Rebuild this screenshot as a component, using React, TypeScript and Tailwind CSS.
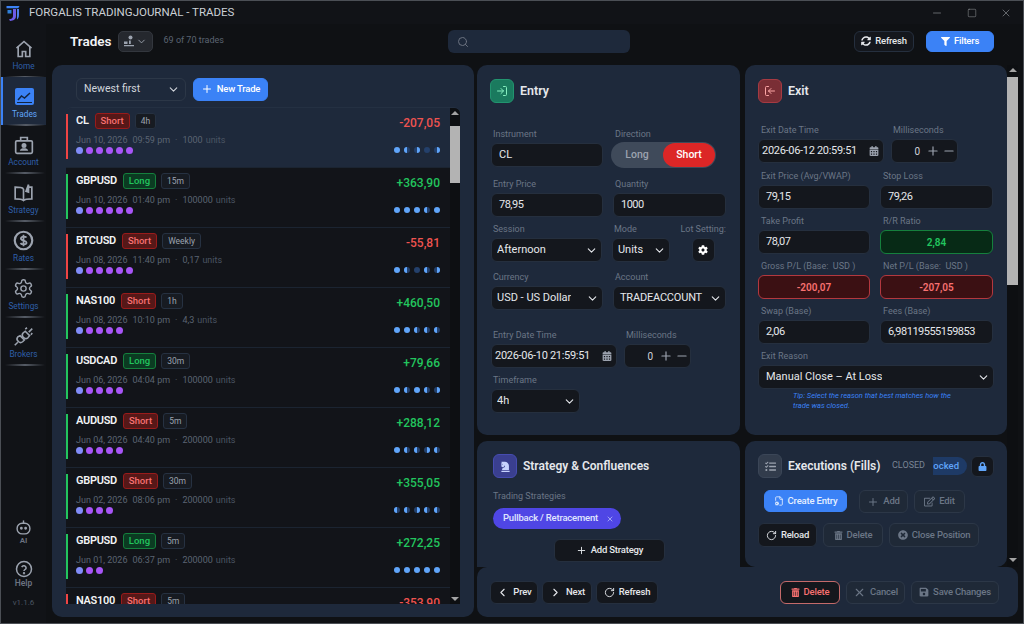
import {
  ChevronDown,
  ChevronLeft,
  ChevronRight,
  FileCog,
  LogIn,
  Minus,
  Plus,
  RotateCw,
  Search,
  Square,
  X,
} from "lucide-react";
import {
  FaCalendarAlt,
  FaChessKnight,
  FaCog,
  FaFilter,
  FaLock,
  FaRegEdit,
  FaSave,
  FaSyncAlt,
  FaTasks,
  FaTimesCircle,
  FaTrashAlt,
} from "react-icons/fa";
import type { ReactNode } from "react";

type Trade = {
  sym: string;
  side: "Long" | "Short";
  tf: string;
  date: string;
  time: string;
  units: string;
  pnl: string;
  bar: "green" | "red";
  dots: number;
  moons: number[];
};

// moons: 0 = dim disc, 1 = left half lit, 2 = full, 3 = right half lit
const trades: Trade[] = [
  { sym: "CL", side: "Short", tf: "4h", date: "Jun 10, 2026", time: "09:59 pm", units: "1000", pnl: "-207,05", bar: "red", dots: 6, moons: [2, 1, 3, 0, 3] },
  { sym: "GBPUSD", side: "Long", tf: "15m", date: "Jun 10, 2026", time: "01:40 pm", units: "100000", pnl: "+363,90", bar: "green", dots: 6, moons: [2, 2, 2, 1, 2] },
  { sym: "BTCUSD", side: "Short", tf: "Weekly", date: "Jun 08, 2026", time: "11:40 pm", units: "0,17", pnl: "-55,81", bar: "red", dots: 6, moons: [2, 1, 0, 1, 3] },
  { sym: "NAS100", side: "Short", tf: "1h", date: "Jun 08, 2026", time: "10:10 pm", units: "4,3", pnl: "+460,50", bar: "green", dots: 5, moons: [2, 2, 1, 1, 1] },
  { sym: "USDCAD", side: "Long", tf: "30m", date: "Jun 06, 2026", time: "04:04 pm", units: "100000", pnl: "+79,66", bar: "green", dots: 5, moons: [2, 1, 2, 1, 3] },
  { sym: "AUDUSD", side: "Short", tf: "5m", date: "Jun 04, 2026", time: "04:40 pm", units: "200000", pnl: "+288,12", bar: "green", dots: 5, moons: [2, 1, 1, 3, 1] },
  { sym: "GBPUSD", side: "Short", tf: "30m", date: "Jun 02, 2026", time: "08:06 pm", units: "200000", pnl: "+355,05", bar: "green", dots: 4, moons: [1, 1, 3, 1, 1] },
  { sym: "GBPUSD", side: "Long", tf: "5m", date: "Jun 01, 2026", time: "06:37 pm", units: "200000", pnl: "+272,25", bar: "green", dots: 3, moons: [2, 2, 2, 2, 2] },
  { sym: "NAS100", side: "Short", tf: "5m", date: "May 29, 2026", time: "03:12 pm", units: "2", pnl: "-353,90", bar: "red", dots: 3, moons: [1, 1, 1, 1, 1] },
];

function Moon({ level }: { level: number }) {
  if (level === 2) return <span className="w-[6.5px] h-[6.5px] rounded-full bg-[#60a5fa]" />;
  if (level === 0) return <span className="w-[6.5px] h-[6.5px] rounded-full bg-[#24406b]" />;
  return (
    <span className={`w-[6.5px] h-[6.5px] rounded-full bg-[#24406b] overflow-hidden flex ${level === 3 ? "justify-end" : ""}`}>
      <span className="w-[3.5px] h-full bg-[#60a5fa]" />
    </span>
  );
}

function TradeRow({ t, active }: { t: Trade; active?: boolean }) {
  return (
    <div className={`h-[60px] shrink-0 flex border-b border-[#1b2431] pr-[20px] pt-[6px] ${active ? "bg-[#1e293b]" : "bg-[#121419]"}`}>
      <div className={`w-[2px] h-[45px] ${t.bar === "red" ? "bg-[#ef4444]" : "bg-[#22c55e]"}`} />
      <div className="ml-[8px] flex-1 min-w-0">
        <div className="flex items-center h-[16px] mt-[-1px]">
          <span className="text-[11px] font-semibold tracking-[-0.3px] text-[#f3f4f6]">{t.sym}</span>
          <span
            className={`ml-[6px] h-[16px] px-[5px] flex items-center rounded-[3px] border text-[9.5px] font-medium ${
              t.side === "Long"
                ? "bg-[#0b3b22] border-[#15803d] text-[#22c55e]"
                : "bg-[#561818] border-[#991b1b] text-[#f87171]"
            }`}
          >
            {t.side}
          </span>
          <span className="ml-[5px] h-[16px] px-[5px] flex items-center rounded-[3px] border border-[#263141] bg-[#171b22] text-[8.5px] text-[#9ca3af]">
            {t.tf}
          </span>
        </div>
        <div className="mt-[5px] flex text-[9px] leading-[12px] text-[#5b6472] whitespace-nowrap">
          <span>{t.date}</span>
          <span className="ml-[5px]">{t.time}</span>
          <span className="ml-[5px]">·</span>
          <span className="ml-[5px]">{t.units}</span>
          <span className="ml-[3px] text-[#4b5563]">units</span>
        </div>
        <div className="mt-[1px] flex gap-[3.5px] items-center">
          {Array.from({ length: t.dots }).map((_, i) => (
            <span key={i} className={`w-[6.5px] h-[6.5px] rounded-full ${i === 0 ? "bg-[#818cf8]" : "bg-[#a855f7]"}`} />
          ))}
        </div>
      </div>
      <div className="flex flex-col items-end justify-between h-[45px] mt-[1px]">
        <span className={`text-[12px] font-medium leading-[16px] ${t.pnl.startsWith("+") ? "text-[#22c55e]" : "text-[#ef5350]"}`}>{t.pnl}</span>
        <div className="flex gap-[3.5px] mb-[7px]">
          {t.moons.map((m, i) => (
            <Moon key={i} level={m} />
          ))}
        </div>
      </div>
    </div>
  );
}

function NavItem({ icon, label, active }: { icon: ReactNode; label: string; active?: boolean }) {
  return (
    <div className={`relative h-[48px] shrink-0 flex flex-col items-center justify-end pb-[6px] ${active ? "bg-[#1e293b] border-l-2 border-[#3b82f6]" : ""}`}>
      {icon}
      <span className={`text-[8.25px] leading-[10px] mt-[2px] ${active ? "text-[#60a5fa]" : "text-[#2f5fa8]"}`}>{label}</span>
      <div className="absolute bottom-[-1px] left-[4px] right-[1px] h-[2px] bg-linear-to-r from-transparent via-[#565c66] to-transparent" />
    </div>
  );
}

function Label({ children, className = "" }: { children: ReactNode; className?: string }) {
  return <div className={`text-[9px] leading-[12px] text-[#6b7686] whitespace-pre ${className}`}>{children}</div>;
}

function Field({ children, className = "", center, num }: { children: ReactNode; className?: string; center?: boolean; num?: boolean }) {
  return (
    <div className={`h-[24px] rounded-[6px] bg-[#14171d] border border-[#252f3e] flex items-center px-[7px] text-[11px] text-[#e5e7eb] ${num ? "tracking-[-0.5px]" : ""} ${center ? "justify-center" : ""} ${className}`}>
      {children}
    </div>
  );
}

function SelectField({ value, textClass = "" }: { value: string; textClass?: string }) {
  return (
    <Field className="justify-between !pl-[5px] !pr-[3px]">
      <span className={`whitespace-nowrap overflow-hidden ${textClass}`}>{value}</span>
      <ChevronDown size={13} className="text-[#e5e7eb] shrink-0" />
    </Field>
  );
}

function Stepper() {
  return (
    <div className="h-[24px] w-[67px] rounded-[6px] bg-[#14171d] border border-[#252f3e] flex items-center justify-end pr-[1px] text-[10px] text-[#d1d5db]">
      <span className="mr-[6px]">0</span>
      <Plus size={14} className="text-[#9ca3af]" />
      <Minus size={14} className="text-[#9ca3af] ml-[2px]" />
    </div>
  );
}

function DateField({ value }: { value: string }) {
  return (
    <Field className="justify-between !pl-[3px] !pr-[4px]">
      <span className="tracking-[-0.3px]">{value}</span>
      <FaCalendarAlt size={10} className="text-[#9ca3af]" />
    </Field>
  );
}

function Btn({ icon, label, className = "" }: { icon: ReactNode; label: string; className?: string }) {
  return (
    <div className={`h-[23px] rounded-[6px] border flex items-center justify-center gap-[4px] text-[9.5px] tracking-[-0.2px] font-medium whitespace-nowrap ${className}`}>
      {icon}
      {label}
    </div>
  );
}

const dark = "bg-[#14171d] border-[#252f3e] text-[#e5e7eb]";
const ghost = "bg-[#1f2937] border-[#2c3747] text-[#6b7686]";

export default function App() {
  return (
    <div className="w-[1024px] h-[624px] flex flex-col overflow-hidden bg-[#0f1114] border border-[#4b4f55] font-['Roboto',sans-serif]">
      {/* title bar */}
      <div className="h-[23px] shrink-0 flex items-center bg-[#111317]">
        <svg width="14" height="16" viewBox="0 0 14 16" className="ml-[5px]">
          <path d="M.5 1h13l-1.200 2.200H.5z" fill="#3b82f6" />
          <path d="M1.500 5h4v3.500h-4z" fill="#2f7fd8" />
          <path d="M7 4h3v7c0 2.500-1.500 4-3.500 4.500L4 16l-1-1.800c2-.2 4-.8 4-3.200z" fill="#6d5ce8" />
          <path d="M11 4h2v6c0 2-.8 3.500-2 4.500z" fill="#4f7fe8" />
        </svg>
        <span className="ml-[9px] text-[11.5px] text-[#cbd0d6]">FORGALIS TRADINGJOURNAL - TRADES</span>
        <div className="ml-auto flex items-center text-[#b5b9be]">
          <Minus size={12} strokeWidth={1} className="mr-[24px]" />
          <Square size={10} strokeWidth={1} className="mr-[23px]" />
          <X size={12} strokeWidth={1} className="mr-[11px]" />
        </div>
      </div>

      <div className="flex-1 min-h-0 flex">
        {/* sidebar */}
        <div className="w-[45px] shrink-0 flex flex-col bg-[#111317] pt-[5px] pb-[15px]">
          <NavItem label="Home" icon={<svg width="20" height="20" viewBox="0 0 24 24" fill="none" stroke="#9ca3af" strokeWidth="2"><path d="M3 11l9-8 9 8" /><path d="M5 9v12h5v-6h4v6h5V9" /></svg>} />
          <NavItem active label="Trades" icon={<svg width="21" height="20" viewBox="0 0 21 20"><rect x="1" y="1" width="19" height="17" rx="2" fill="#3b82f6" /><path d="M4 13l3.500-4 3 2 5.500-5" fill="none" stroke="#12243f" strokeWidth="1.500" /><path d="M3 15.500h15" stroke="#12243f" /></svg>} />
          <NavItem label="Account" icon={<svg width="20" height="20" viewBox="0 0 24 24" fill="none" stroke="#9ca3af" strokeWidth="2"><rect x="2" y="7" width="20" height="15" rx="1.500" /><path d="M8 7V3h8v4" /><circle cx="12" cy="12.500" r="2" fill="#9ca3af" /><path d="M7 19c.5-2.500 2.500-3 5-3s4.500.5 5 3z" fill="#9ca3af" stroke="none" /></svg>} />
          <NavItem label="Strategy" icon={<svg width="21" height="20" viewBox="0 0 24 24" fill="none" stroke="#9ca3af" strokeWidth="2"><path d="M12 7c-2-2-5-2-10-2v14c5 0 8 0 10 2 2-2 5-2 10-2V5h-4" /><path d="M12 7v14" /><path d="M15 10l3-8v9z" fill="#9ca3af" /></svg>} />
          <NavItem label="Rates" icon={<svg width="21" height="21" viewBox="0 0 24 24" fill="none" stroke="#9ca3af" strokeWidth="2.500"><circle cx="12" cy="12" r="10" /><path d="M15.500 8.500c-1-1.200-6-1.800-6.500 1s6.500 2.500 6.500 5-5.500 2.500-7 .5M12 5.500v13" strokeWidth="2" /></svg>} />
          <NavItem label="Settings" icon={<GearIcon />} />
          <NavItem label="Brokers" icon={<svg width="21" height="21" viewBox="0 0 24 24" fill="none" stroke="#9ca3af" strokeWidth="1.800"><path d="M14 6l5 5-2 2.500c-1.500 1.200-3.500 1-4.500 0L11.500 12.500c-1-1-1.200-3 0-4.500z" /><path d="M18 7l4-4M14 3.500l2-1.500M20.500 10l1.500-2" /><path d="M8 11l5 5-2 2c-1.500 1.200-3.500 1-4.500 0L5.500 17c-1-1-1.200-3 0-4.500z" /><path d="M5.500 18.500L2 22" /></svg>} />
          <div className="mt-auto flex flex-col items-center text-[#6b7280]">
            <svg width="17" height="17" viewBox="0 0 24 24" fill="none" stroke="#9ca3af" strokeWidth="2">
              <path d="M12 6V2" />
              <rect x="3" y="6" width="18" height="15" rx="7" />
              <circle cx="9" cy="13" r="1" fill="#9ca3af" />
              <circle cx="15" cy="13" r="1" fill="#9ca3af" />
            </svg>
            <span className="text-[8px] leading-[10px] font-semibold">AI</span>
            <svg width="18" height="18" viewBox="0 0 24 24" fill="none" stroke="#9ca3af" strokeWidth="2" className="mt-[14px]">
              <circle cx="12" cy="12" r="10" />
              <path d="M9 9.500a3 3 0 0 1 5.800 1c0 2-2.800 2.300-2.800 4" />
              <circle cx="12" cy="17.500" r=".6" fill="#9ca3af" />
            </svg>
            <span className="text-[8.5px] leading-[10px] font-semibold">Help</span>
            <span className="text-[8px] leading-[10px] mt-[10px] text-[#4b5563]">v1.1.6</span>
          </div>
        </div>

        {/* main */}
        <div className="flex-1 min-w-0 flex flex-col pl-[6px] pr-[5px]">
          {/* header */}
          <div className="h-[34px] shrink-0 flex items-center pl-[18px] pr-[24px] relative">
            <span className="text-[13.5px] font-semibold text-[#f3f4f6]">Trades</span>
            <div className="ml-[6px] w-[35px] h-[21px] rounded-[5px] bg-[#25282e] border border-[#33373e] flex items-center justify-center gap-[1px] text-[#9ca3af]">
              <svg width="12" height="12" viewBox="0 0 12 12" fill="#9ca3af">
                <circle cx="7.500" cy="2.500" r="2" />
                <path d="M1 6.500h3.500V9H1zM6 5.500h1.800V9H6zM1 10h10v1.200H1z" />
              </svg>
              <ChevronDown size={11} />
            </div>
            <span className="ml-[11px] text-[9px] text-[#5b6472]">69 of 70 trades</span>
            <div className="absolute left-[396px] top-[6px] w-[182px] h-[23px] rounded-[6px] bg-[#1e293b] flex items-center pl-[9px]">
              <Search size={12} className="text-[#6b7280]" />
            </div>
            <Btn className={`ml-auto w-[60px] !h-[21px] ${dark}`} icon={<FaSyncAlt size={10} />} label="Refresh" />
            <Btn className="ml-[12px] w-[68px] !h-[21px] bg-[#3b82f6] border-[#3b82f6] text-white" icon={<FaFilter size={9} />} label="Filters" />
          </div>

          {/* panels */}
          <div className="flex-1 min-h-0 flex gap-[3px] pt-[7px] pb-[6px]">
            {/* list */}
            <div className="w-[422px] shrink-0 rounded-[10px] bg-[#1e293b] flex flex-col px-[14px] pb-[13px] overflow-hidden">
              <div className="h-[42px] shrink-0 flex items-center gap-[7px] pl-[10px] pt-[6px]">
                <div className="w-[110px] h-[23px] rounded-[6px] border border-[#2c3747] flex items-center justify-between pl-[7px] pr-[5px] text-[10.5px] text-[#d1d5db]">
                  Newest first
                  <ChevronDown size={13} />
                </div>
                <Btn className="w-[75px] bg-[#3b82f6] border-[#3b82f6] text-white" icon={<Plus size={12} />} label="New Trade" />
              </div>
              <div className="relative flex-1 min-h-0 overflow-hidden flex flex-col rounded-t-[6px] border-t border-[#243042]">
                {trades.map((t, i) => (
                  <TradeRow key={i} t={t} active={i === 0} />
                ))}
                {/* scroll bar */}
                <div className="absolute right-0 top-0 bottom-0 w-[10px] bg-[#0d0f12] flex flex-col items-center rounded-tr-[5px]">
                  <div className="w-0 h-0 mt-[3px] border-x-[4px] border-x-transparent border-b-[4px] border-b-[#a3a3a3]" />
                  <div className="mt-[11px] w-full h-[57px] bg-[#b3b3b3]" />
                  <div className="mt-auto mb-[3px] w-0 h-0 border-x-[4px] border-x-transparent border-t-[4px] border-t-[#a3a3a3]" />
                </div>
              </div>
            </div>

            {/* right */}
            <div className="flex-1 min-w-0 flex flex-col relative">
              <div className="flex-1 min-h-0 flex gap-[5px] pr-[11px] overflow-hidden">
                {/* col 1 */}
                <div className="w-[263px] shrink-0 flex flex-col gap-[6px]">
                  <div className="h-[370px] shrink-0 rounded-[10px] bg-[#1e293b] pl-[13px] pr-[14px] pt-[14px]">
                    <div className="flex items-center gap-[6px]">
                      <div className="w-[24px] h-[24px] rounded-[6px] bg-[#1a7a5e] border border-[#22946f] flex items-center justify-center text-[#86efc0]">
                        <LogIn size={12} />
                      </div>
                      <span className="text-[12.5px] font-semibold text-[#e5e7eb]">Entry</span>
                    </div>
                    <div className="mt-[25px] grid grid-cols-[112px_113px] gap-x-[10px] pl-[1px]">
                      <div>
                        <Label className="pl-[2px] mb-[3px]">Instrument</Label>
                        <Field>CL</Field>
                      </div>
                      <div>
                        <Label className="pl-[2px] mb-[3px]">Direction</Label>
                        <div className="h-[26px] w-[105px] ml-[-2px] mt-[-1px] rounded-full bg-[#3f4a5a] flex items-center text-[10.5px] font-medium">
                          <span className="flex-1 text-center text-[#9ca3af]">Long</span>
                          <span className="w-[52px] h-[24px] mr-[1px] rounded-full bg-[#dc2626] flex items-center justify-center text-white">Short</span>
                        </div>
                      </div>
                    </div>
                    <div className="mt-[10px] grid grid-cols-[112px_113px] gap-x-[10px] pl-[1px]">
                      <div>
                        <Label className="pl-[2px] mb-[3px]">Entry Price</Label>
                        <Field num>78,95</Field>
                      </div>
                      <div>
                        <Label className="pl-[2px] mb-[3px]">Quantity</Label>
                        <Field num>1000</Field>
                      </div>
                    </div>
                    <div className="mt-[6px] flex pl-[1px]">
                      <div className="w-[112px]">
                        <Label className="pl-[2px] mb-[3px]">Session</Label>
                        <SelectField value="Afternoon" />
                      </div>
                      <div className="ml-[10px] w-[59px]">
                        <Label className="pl-[2px] mb-[3px]">Mode</Label>
                        <SelectField value="Units" />
                      </div>
                      <div className="ml-[10px] flex flex-col items-center w-[46px]">
                        <Label className="mb-[3px]">Lot Setting:</Label>
                        <div className="w-[23px] h-[24px] rounded-[6px] bg-[#14171d] border border-[#252f3e] flex items-center justify-center text-white">
                          <FaCog size={10} />
                        </div>
                      </div>
                    </div>
                    <div className="mt-[9px] grid grid-cols-[112px_113px] gap-x-[10px] pl-[1px]">
                      <div>
                        <Label className="pl-[2px] mb-[3px]">Currency</Label>
                        <SelectField value="USD - US Dollar" />
                      </div>
                      <div>
                        <Label className="pl-[2px] mb-[3px]">Account</Label>
                        <SelectField value="TRADEACCOUNT" textClass="w-[86px] pl-[1px] tracking-[-0.2px]" />
                      </div>
                    </div>
                    <div className="mt-[19px] flex pl-[1px]">
                      <div className="w-[126px]">
                        <Label className="pl-[2px] mb-[3px]">Entry Date Time</Label>
                        <DateField value="2026-06-10 21:59:51" />
                      </div>
                      <div className="ml-[7px]">
                        <Label className="pl-[2px] mb-[3px]">Milliseconds</Label>
                        <Stepper />
                      </div>
                    </div>
                    <div className="mt-[6px] pl-[1px] w-[90px]">
                      <Label className="pl-[2px] mb-[3px]">Timeframe</Label>
                      <SelectField value="4h" />
                    </div>
                  </div>

                  <div className="flex-1 min-h-0 rounded-t-[10px] bg-[#1e293b] pl-[16px] pt-[13px] overflow-hidden">
                    <div className="flex items-center gap-[6px]">
                      <div className="w-[24px] h-[24px] rounded-[6px] bg-[#3a3f8f] border border-[#464cb0] flex items-center justify-center text-[#c7d2fe]">
                        <FaChessKnight size={11} />
                      </div>
                      <span className="text-[12px] font-semibold text-[#e5e7eb]">Strategy &amp; Confluences</span>
                    </div>
                    <Label className="mt-[12px]">Trading Strategies</Label>
                    <div className="mt-[6px] w-[128px] h-[21px] rounded-full bg-[#4f46e5] flex items-center pl-[10px] text-[9.5px] tracking-[-0.2px] font-medium text-[#e0e7ff] whitespace-nowrap">
                      Pullback / Retracement
                      <X size={8} className="ml-[8px] text-[#c7d2fe]" />
                    </div>
                    <Btn className={`ml-[61px] mt-[10px] w-[111px] ${dark}`} icon={<Plus size={11} />} label="Add Strategy" />
                  </div>
                </div>

                {/* col 2 */}
                <div className="w-[262px] shrink-0 flex flex-col gap-[6px]">
                  <div className="h-[370px] shrink-0 rounded-[10px] bg-[#1e293b] pl-[13px] pr-[13px] pt-[14px]">
                    <div className="flex items-center gap-[6px]">
                      <div className="w-[24px] h-[24px] rounded-[6px] bg-[#7a2e35] border border-[#a63a42] flex items-center justify-center text-[#fca5a5]">
                        <LogIn size={12} className="rotate-180" />
                      </div>
                      <span className="text-[12.5px] font-semibold text-[#e5e7eb]">Exit</span>
                    </div>
                    <div className="mt-[21px] flex">
                      <div className="w-[126px]">
                        <Label className="pl-[3px] mb-[3px]">Exit Date Time</Label>
                        <DateField value="2026-06-12 20:59:51" />
                      </div>
                      <div className="ml-[7px]">
                        <Label className="pl-[2px] mb-[3px]">Milliseconds</Label>
                        <Stepper />
                      </div>
                    </div>
                    <div className="mt-[7px] grid grid-cols-[112px_113px] gap-x-[10px]">
                      <div><Label className="pl-[3px] mb-[3px]">Exit Price (Avg/VWAP)</Label><Field num>79,15</Field></div>
                      <div><Label className="pl-[3px] mb-[3px]">Stop Loss</Label><Field num>79,26</Field></div>
                    </div>
                    <div className="mt-[6px] grid grid-cols-[112px_113px] gap-x-[10px]">
                      <div><Label className="pl-[3px] mb-[3px]">Take Profit</Label><Field num>78,07</Field></div>
                      <div>
                        <Label className="pl-[3px] mb-[3px]">R/R Ratio</Label>
                        <Field center className="!bg-[#072a16] !border-[#15803d] !text-[#22c55e] font-semibold !text-[10px]">2,84</Field>
                      </div>
                    </div>
                    <div className="mt-[6px] grid grid-cols-[112px_113px] gap-x-[10px]">
                      <div>
                        <Label className="pl-[3px] mb-[3px]">Gross P/L (Base:  USD )</Label>
                        <Field center className="!bg-[#3b1013] !border-[#b3383f] !text-[#f87171] font-semibold !text-[10px]">-200,07</Field>
                      </div>
                      <div>
                        <Label className="pl-[3px] mb-[3px]">Net P/L (Base:  USD )</Label>
                        <Field center className="!bg-[#3b1013] !border-[#b3383f] !text-[#f87171] font-semibold !text-[10px]">-207,05</Field>
                      </div>
                    </div>
                    <div className="mt-[6px] grid grid-cols-[112px_113px] gap-x-[10px]">
                      <div><Label className="pl-[3px] mb-[3px]">Swap (Base)</Label><Field num>2,06</Field></div>
                      <div><Label className="pl-[3px] mb-[3px]">Fees (Base)</Label><Field num>6,98119555159853</Field></div>
                    </div>
                    <Label className="mt-[6px] pl-[3px] mb-[3px]">Exit Reason</Label>
                    <SelectField value="Manual Close – At Loss" textClass="pl-[2px]" />
                    <p className="mt-[2px] ml-[35px] w-[165px] text-[7.5px] leading-[10px] italic text-[#3b82f6]">
                      Tip: Select the reason that best matches how the trade was closed.
                    </p>
                  </div>

                  <div className="flex-1 min-h-0 rounded-[10px] bg-[#1e293b] pl-[13px] pr-[13px] pt-[13px] overflow-hidden">
                    <div className="flex items-center">
                      <div className="w-[24px] h-[24px] rounded-[6px] bg-[#323c4c] border border-[#3b4657] flex items-center justify-center text-[#9ca3af]">
                        <FaTasks size={11} />
                      </div>
                      <span className="ml-[6px] text-[12px] font-semibold text-[#e5e7eb]">Executions (Fills)</span>
                      <span className="ml-auto text-[9px] text-[#7a8494]">CLOSED</span>
                      <div className="ml-[8px] w-[34px] h-[18px] rounded-r-full bg-[#1e3a66] flex items-center justify-end pr-[8px] text-[9.5px] font-medium text-[#60a5fa] overflow-hidden">
                        ocked
                      </div>
                      <div className="ml-[4px] w-[23px] h-[21px] rounded-[6px] bg-[#14171d] border border-[#252f3e] flex items-center justify-center text-[#60a5fa]">
                        <FaLock size={9} />
                      </div>
                    </div>
                    <div className="mt-[12px] flex ml-[6px]">
                      <Btn className="w-[83px] !h-[22px] bg-[#3b82f6] border-[#3b82f6] text-[#e5efff]" icon={<FileCog size={10} />} label="Create Entry" />
                      <Btn className={`ml-[12px] w-[49px] ${ghost}`} icon={<Plus size={12} />} label="Add" />
                      <Btn className={`ml-[6px] w-[51px] ${ghost}`} icon={<FaRegEdit size={11} />} label="Edit" />
                    </div>
                    <div className="mt-[10px] flex">
                      <Btn className={`w-[59px] !h-[24px] ${dark}`} icon={<RotateCw size={11} />} label="Reload" />
                      <Btn className={`ml-[6px] w-[60px] !h-[24px] ${ghost}`} icon={<FaTrashAlt size={9} />} label="Delete" />
                      <Btn className={`ml-[6px] w-[90px] !h-[24px] ${ghost}`} icon={<FaTimesCircle size={10} />} label="Close Position" />
                    </div>
                  </div>
                </div>
                {/* page scroll bar */}
                <div className="absolute right-0 top-0 h-[502px] w-[11px] bg-[#0d0f12] flex flex-col items-center">
                  <div className="w-0 h-0 mt-[3px] border-x-[4px] border-x-transparent border-b-[4px] border-b-[#a3a3a3]" />
                  <div className="mt-[5px] w-full h-[208px] bg-[#b3b3b3]" />
                  <div className="mt-auto mb-[5px] w-0 h-0 border-x-[4px] border-x-transparent border-t-[4px] border-t-[#a3a3a3]" />
                </div>
              </div>

              {/* action bar */}
              <div className="h-[50px] shrink-0 rounded-[10px] bg-[#1e293b] flex items-center pl-[13px] pr-[19px]">
                <Btn className={`w-[48px] ${dark}`} icon={<ChevronLeft size={13} />} label="Prev" />
                <Btn className={`ml-[4px] w-[50px] ${dark}`} icon={<ChevronRight size={13} />} label="Next" />
                <Btn className={`ml-[4px] w-[62px] ${dark}`} icon={<RotateCw size={11} />} label="Refresh" />
                <Btn className="ml-auto w-[60px] bg-[#14171d] border-[#c46a6a] text-[#f87171]" icon={<FaTrashAlt size={9} />} label="Delete" />
                <Btn className={`ml-[6px] w-[59px] ${ghost}`} icon={<X size={13} />} label="Cancel" />
                <Btn className={`ml-[6px] w-[88px] ${ghost}`} icon={<FaSave size={10} />} label="Save Changes" />
              </div>
            </div>
          </div>
        </div>
      </div>
    </div>
  );
}

function GearIcon() {
  return (
    <svg width="21" height="21" viewBox="0 0 24 24" fill="none" stroke="#9ca3af" strokeWidth="1.600" strokeLinecap="round" strokeLinejoin="round">
      <path d="M12.220 2h-.44a2 2 0 0 0-2 2v.18a2 2 0 0 1-1 1.730l-.43.250a2 2 0 0 1-2 0l-.150-.080a2 2 0 0 0-2.730.730l-.220.380a2 2 0 0 0 .730 2.730l.150.100a2 2 0 0 1 1 1.720v.510a2 2 0 0 1-1 1.740l-.150.090a2 2 0 0 0-.730 2.730l.220.380a2 2 0 0 0 2.730.730l.150-.080a2 2 0 0 1 2 0l.430.250a2 2 0 0 1 1 1.730V20a2 2 0 0 0 2 2h.44a2 2 0 0 0 2-2v-.18a2 2 0 0 1 1-1.730l.430-.250a2 2 0 0 1 2 0l.150.080a2 2 0 0 0 2.730-.730l.220-.390a2 2 0 0 0-.730-2.730l-.150-.080a2 2 0 0 1-1-1.740v-.5a2 2 0 0 1 1-1.740l.150-.090a2 2 0 0 0 .730-2.730l-.220-.380a2 2 0 0 0-2.730-.730l-.150.080a2 2 0 0 1-2 0l-.430-.250a2 2 0 0 1-1-1.730V4a2 2 0 0 0-2-2z" />
      <circle cx="12" cy="12" r="3" />
    </svg>
  );
}
